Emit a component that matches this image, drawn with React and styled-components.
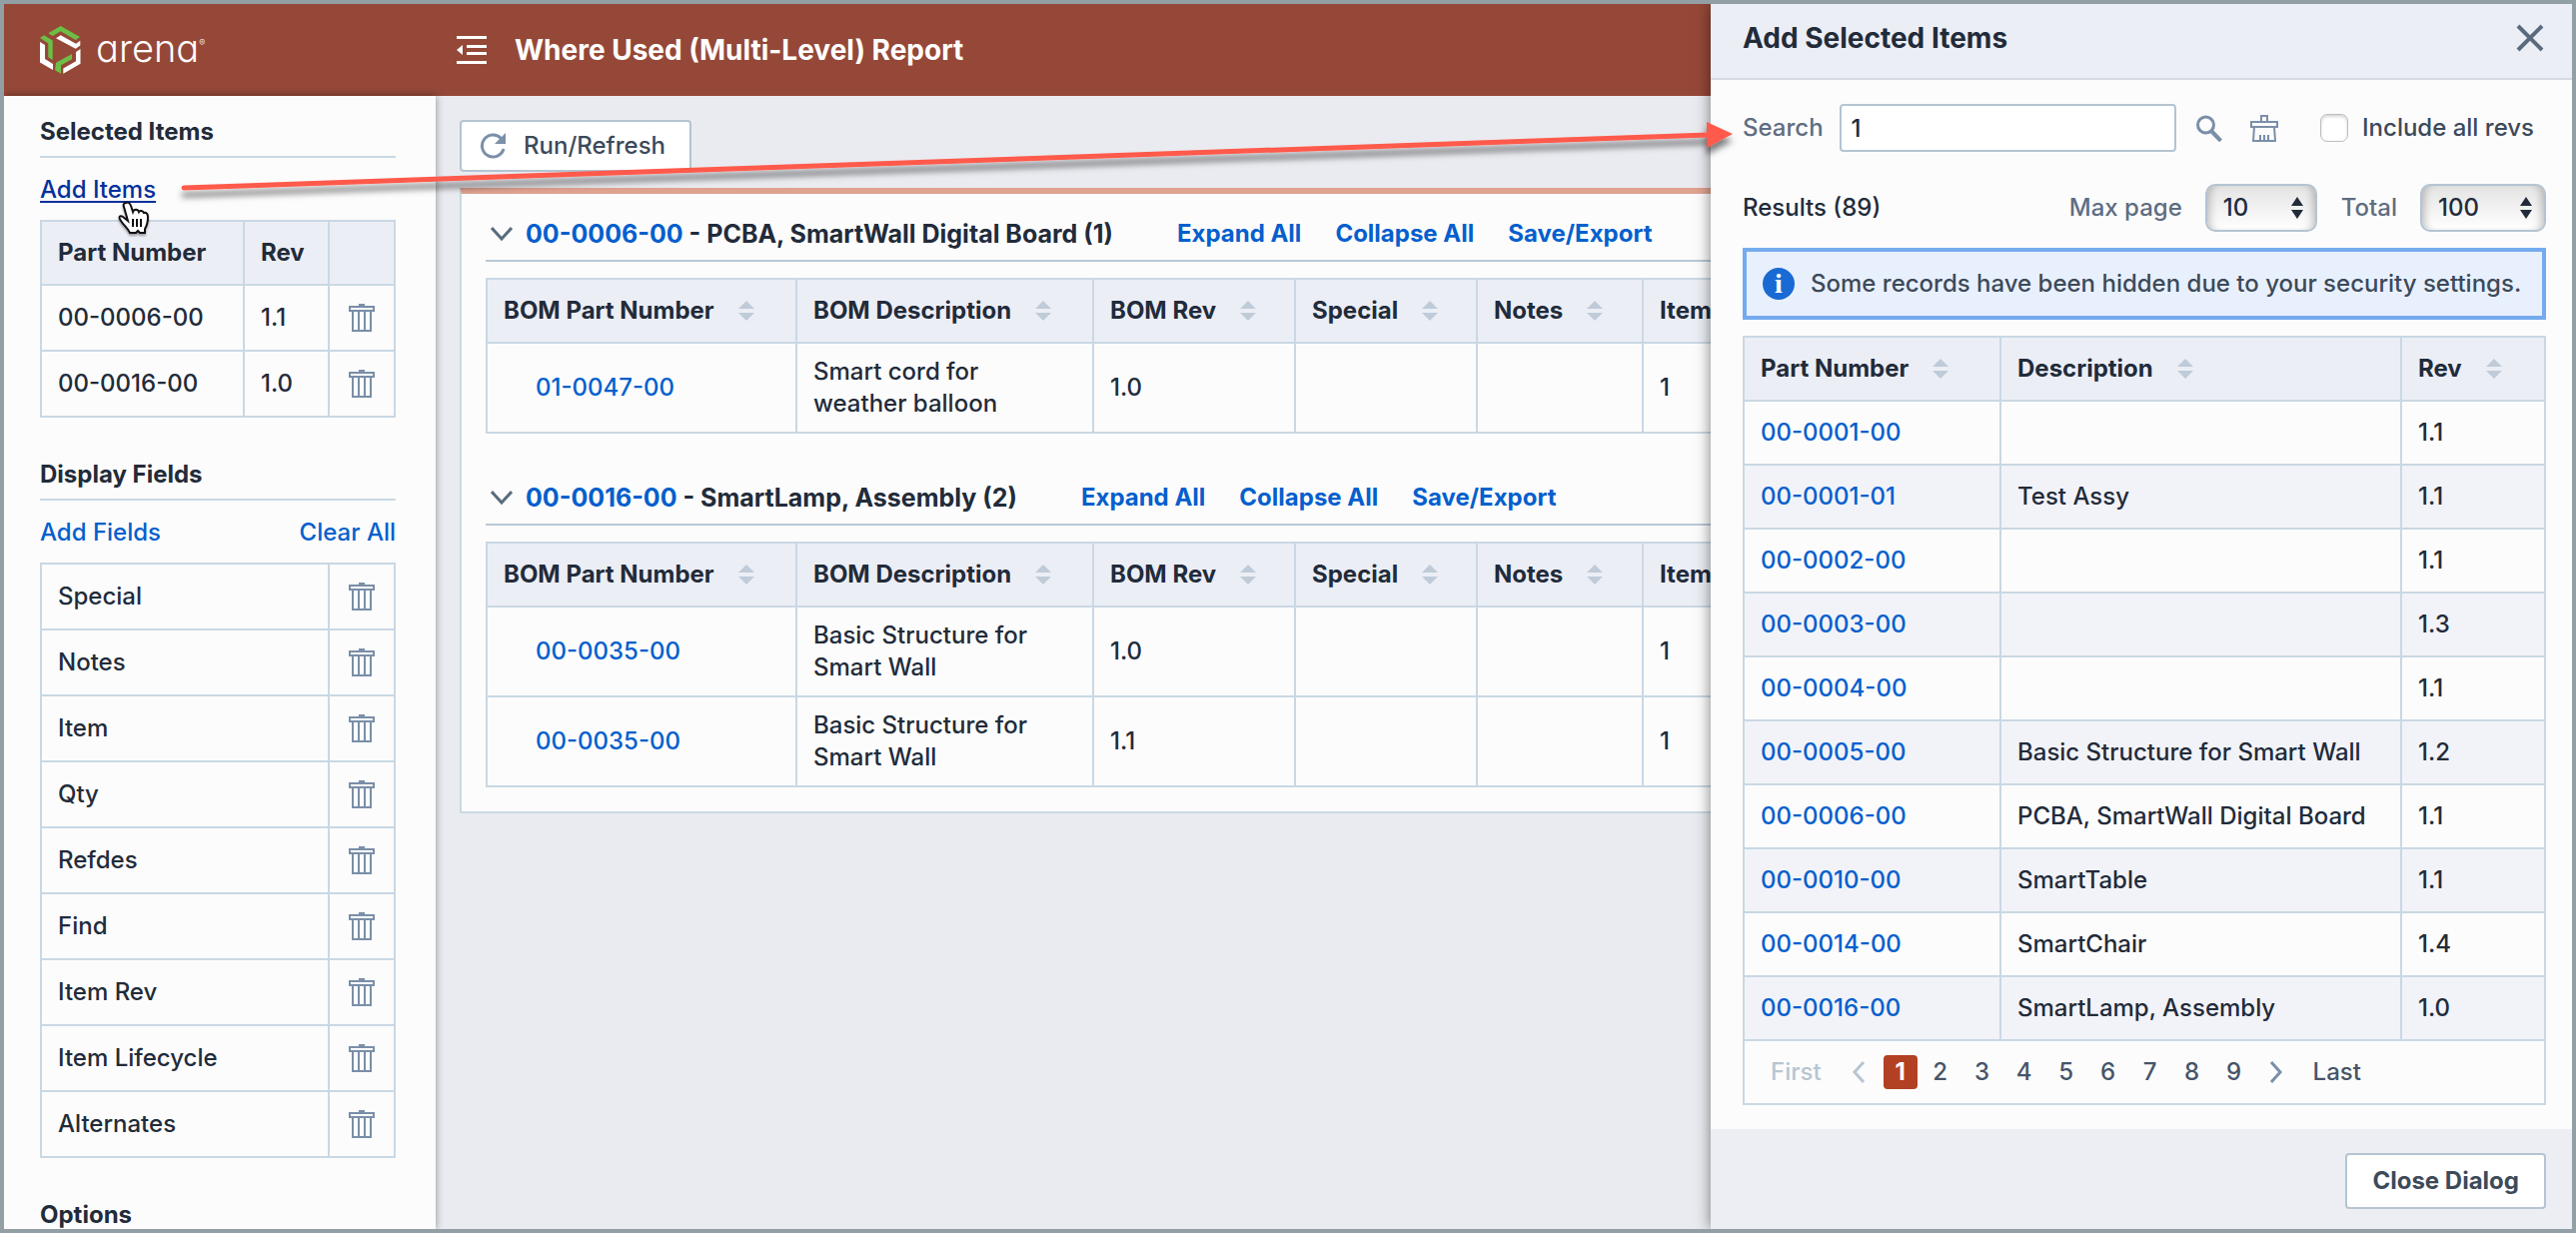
import React, { useState } from "react";
import styled, { createGlobalStyle } from "styled-components";

const GlobalStyle = createGlobalStyle`
  * {
    box-sizing: border-box;
  }

  body {
    margin: 0;
    font-family: Inter, "Liberation Sans", sans-serif;
    font-size: 24px;
    line-height: 32px;
    font-weight: 500;
    color: #222b3a;
    background: #929fa5;
  }

  button, input, select {
    font: inherit;
    color: inherit;
  }

  svg {
    display: block;
    flex: none;
  }
`;

const Page = styled.div`
  position: relative;
  height: 100vh;
  border: 4px solid #929fa5;
  background: #eaebf0;
  display: flex;
  flex-direction: column;
  overflow: hidden;
`;

const TopBar = styled.header`
  flex: none;
  height: 92px;
  padding-left: 36px;
  background: #954837;
  color: #ffffff;
  display: flex;
  align-items: center;
`;

const Brand = styled.a`
  width: 417px;
  display: flex;
  align-items: center;
  gap: 15px;
  color: #ffffff;
  text-decoration: none;
`;

const BrandName = styled.span`
  padding-bottom: 4px;
  font-size: 38px;
  line-height: 48px;
  font-weight: 300;
  font-feature-settings: "cv11";
`;

const BrandMark = styled.sup`
  font-size: 9px;
  line-height: 9px;
  vertical-align: 16px;
`;

const PageTitle = styled.h1`
  margin: 0 0 0 28px;
  font-size: 28px;
  line-height: 36px;
  font-weight: 700;
`;

const IconButton = styled.button`
  display: flex;
  align-items: center;
  justify-content: center;
  padding: 0;
  border: none;
  background: none;
  color: ${(props) => props.$color || "#7a8fa8"};
  cursor: pointer;
`;

const Columns = styled.div`
  flex: 1;
  min-height: 0;
  display: flex;
`;

const Sidebar = styled.aside`
  flex: none;
  width: 432px;
  padding: 20px 40px 0 36px;
  background: #fcfcfc;
  box-shadow: 0 0 8px rgba(0, 0, 0, 0.4);
  overflow: hidden;
  clip-path: inset(-8px -8px 0 0);
`;

const SidebarSection = styled.section`
  margin-bottom: 41px;
`;

const SidebarTitle = styled.h2`
  margin: 0;
  padding-bottom: 8px;
  border-bottom: 2px solid #c9d8e4;
  font-size: 24px;
  line-height: 32px;
  font-weight: 700;
`;

const SidebarLinks = styled.div`
  height: 62px;
  padding-top: 2px;
  display: flex;
  align-items: center;
  justify-content: space-between;
`;

const TextLink = styled.a`
  color: ${(props) => (props.$active ? "#06309a" : "#055fcd")};
  text-decoration: ${(props) => (props.$active ? "underline" : "none")};
  text-decoration-thickness: 2px;
  text-underline-offset: 3px;
  font-weight: ${(props) => (props.$bold ? 700 : 500)};
`;

const Table = styled.table`
  width: ${(props) => props.$width || "100%"};
  table-layout: fixed;
  border-collapse: collapse;
`;

const HeadCell = styled.th`
  height: 64px;
  padding: 0 16px;
  border: 2px solid #c9d8e4;
  background: #eceef6;
  text-align: left;
  font-weight: 700;
  white-space: nowrap;
`;

const Cell = styled.td`
  height: ${(props) => props.$height || 64}px;
  padding: 0 16px 0 ${(props) => (props.$indent ? 48 : 16)}px;
  border: 2px solid #c9d8e4;
  background: ${(props) => (props.$shaded ? "#f2f3f8" : "#fcfcfc")};
`;

const IconCell = styled(Cell)`
  padding: 0;

  & > button {
    margin: 0 auto;
  }
`;

const SortLabel = styled.span`
  display: flex;
  align-items: center;
  gap: 24px;
`;

const Main = styled.main`
  flex: 1;
  min-width: 0;
  padding: 24px 0 0 24px;
`;

const RunButton = styled.button`
  height: 52px;
  padding: 0 24px 0 18px;
  display: flex;
  align-items: center;
  gap: 18px;
  border: 2px solid #b4c4d2;
  border-radius: 4px;
  background: #ffffff;
  color: #3c4a5a;
`;

const ReportPanel = styled.section`
  margin-top: 16px;
  padding: 14px 0 24px 24px;
  border: 2px solid #c9d8e4;
  border-top: 6px solid #dfa290;
  background: #fcfcfc;
`;

const Group = styled.section`
  & + & {
    margin-top: 38px;
  }
`;

const GroupHeader = styled.div`
  height: 54px;
  padding-left: 5px;
  border-bottom: 2px solid #b9c8d5;
  display: flex;
  align-items: center;
`;

const GroupTitle = styled.h3`
  margin: 0 64px 0 13px;
  font-size: 25px;
  line-height: 32px;
  font-weight: 700;
`;

const GroupActions = styled.nav`
  display: flex;
  gap: 34px;
`;

const TableScroll = styled.div`
  margin-top: 16px;
  overflow: hidden;
`;

// Slides over the report from the right edge
const Drawer = styled.aside`
  position: absolute;
  top: 0;
  right: 0;
  bottom: 0;
  width: 862px;
  display: flex;
  flex-direction: column;
  background: #fcfcfc;
  box-shadow: 0 0 14px rgba(0, 0, 0, 0.5);
`;

const DrawerHeader = styled.div`
  height: 76px;
  padding: 0 28px 6px 32px;
  border-bottom: 2px solid #d5dae1;
  background: #eceef6;
  display: flex;
  align-items: center;
  justify-content: space-between;
`;

const DrawerTitle = styled.h2`
  margin: 0;
  font-size: 28px;
  line-height: 36px;
  font-weight: 700;
`;

const DrawerBody = styled.div`
  flex: 1;
  padding: 24px 26px 0 32px;
`;

const SearchRow = styled.div`
  display: flex;
  align-items: center;
`;

const FieldLabel = styled.label`
  color: #5e6d82;
`;

const SearchInput = styled.input`
  flex: 1;
  min-width: 0;
  height: 48px;
  margin: 0 20px 0 16px;
  padding: 0 10px;
  border: 2px solid #b4c4d2;
  border-radius: 4px;
  background: #ffffff;
`;

const ClearButton = styled(IconButton)`
  margin-left: 28px;
`;

const CheckLabel = styled.label`
  margin: 0 12px 0 42px;
  display: flex;
  align-items: center;
  gap: 14px;
  color: #3c4a5a;
`;

const CheckBox = styled.input`
  appearance: none;
  width: 28px;
  height: 28px;
  margin: 0;
  border: 1px solid #bdbdbf;
  border-radius: 7px;
  background: #ffffff;
  box-shadow: inset 0 2px 3px rgba(0, 0, 0, 0.16);
`;

const ResultsRow = styled.div`
  margin: 32px 0 16px;
  display: flex;
  align-items: center;
`;

const ResultsCount = styled.span`
  flex: 1;
`;

const SelectWrap = styled.span`
  position: relative;
  margin-left: 23px;
  color: #222b3a;

  & > svg {
    position: absolute;
    right: 14px;
    top: 13px;
    pointer-events: none;
  }

  & + label {
    margin-left: 24px;
  }
`;

const Select = styled.select`
  appearance: none;
  display: block;
  width: ${(props) => props.$width}px;
  height: 48px;
  padding: 0 16px;
  border: 2px solid #b4c4d2;
  border-radius: 10px;
  background: linear-gradient(#e4e4e4, #ffffff);
  box-shadow: inset 8px 0 8px -6px rgba(0, 0, 0, 0.25), inset -8px 0 8px -6px rgba(0, 0, 0, 0.25);
`;

const Notice = styled.div`
  height: 72px;
  margin-bottom: 16px;
  padding: 0 16px;
  border: 4px solid #75abee;
  background: #e9f0fd;
  color: #3c4a5a;
  display: flex;
  align-items: center;
  gap: 16px;
  white-space: nowrap;
`;

const InfoBadge = styled.span`
  flex: none;
  width: 32px;
  height: 32px;
  border-radius: 50%;
  background: #1a6ad4;
  color: #ffffff;
  font-family: "Liberation Serif", serif;
  font-size: 28px;
  line-height: 32px;
  font-weight: 700;
  text-align: center;
`;

const Pager = styled.nav`
  height: 64px;
  padding-left: 26px;
  border: 2px solid #c9d8e4;
  border-top: none;
  display: flex;
  align-items: center;
`;

const PagerText = styled.button`
  padding: 0;
  border: none;
  background: none;
  color: ${(props) => (props.disabled ? "#b8c5d2" : "#46556a")};
`;

const PagerArrow = styled(IconButton)`
  width: 14px;
  margin: 0 ${(props) => (props.$next ? 30 : 18)}px 0 ${(props) => (props.$next ? 10 : 30)}px;
`;

const PageNumber = styled.button`
  width: 34px;
  height: 34px;
  margin-right: ${(props) => (props.$current ? 6 : 8)}px;
  padding: 0;
  border: none;
  border-radius: 4px;
  background: ${(props) => (props.$current ? "#b24023" : "none")};
  color: ${(props) => (props.$current ? "#ffffff" : "#46556a")};
  font-weight: ${(props) => (props.$current ? 700 : 500)};
`;

const DrawerFooter = styled.div`
  height: 100px;
  padding: 4px 26px 0 32px;
  background: #edeef4;
  display: flex;
  align-items: center;
  justify-content: flex-end;
`;

const CloseButton = styled.button`
  height: 56px;
  padding: 0 25px;
  border: 2px solid #b4c4d2;
  border-radius: 4px;
  background: #ffffff;
  color: #3c4a5a;
  font-weight: 700;
`;

const Callout = styled.svg`
  position: absolute;
  left: 0;
  top: 0;
  pointer-events: none;
  overflow: visible;
`;

const LinkAnchor = styled.span`
  position: relative;
`;

const Pointer = styled.svg`
  position: absolute;
  left: 78px;
  top: 27px;
  filter: drop-shadow(0 2px 1px rgba(0, 0, 0, 0.35));
`;

const LogoIcon = () => (
  <svg width="41" height="48" viewBox="0 0 41 48">
    <g fill="#6cbf45">
      <path d="M8.300 7.300 L20.700 0 L40 11 L35.700 14 L20.700 5.300 L12.700 10 Z" />
      <path d="M0 12 L4 9.300 L12.700 14.500 V34 L8.300 31.300 V17.500 Z" />
      <path d="M16 36.700 L32 28 V33.300 L21 39.300 V47.700 L15 44.300 Z" />
    </g>
    <g fill="#ffffff">
      <path d="M16 12.300 L20.700 9.300 L36 17.700 L40.300 14.700 V19.500 L35.700 22.700 Z" />
      <path d="M0 16 L5 19 V33 L13 38 V44 L0 36.500 Z" />
      <path d="M36 26 L40.500 23 V37.700 L23.300 47.700 V42.500 L36 35.300 Z" />
    </g>
  </svg>
);

const MenuIcon = () => (
  <svg width="30" height="28" viewBox="0 0 30 28" fill="currentColor">
    <rect width="30" height="3" />
    <rect x="10" y="9" width="20" height="3" />
    <rect x="10" y="16" width="20" height="3" />
    <rect y="25" width="30" height="3" />
    <path d="M6 9 V19 L0 14 Z" />
  </svg>
);

const TrashIcon = () => (
  <svg width="26" height="28" viewBox="0 0 26 28" fill="none" stroke="currentColor">
    <rect x="10" y="0" width="6" height="3" fill="currentColor" stroke="none" />
    <rect x="1" y="3" width="24" height="4" strokeWidth="2" />
    <path d="M4 8 V27 H22 V8 M10 8 V27 M16 8 V27" strokeWidth="2" />
  </svg>
);

const RefreshIcon = () => (
  <svg width="26" height="26" viewBox="0 0 26 26">
    <path d="M21.500 5.500 A11 11 0 1 0 24 16" fill="none" stroke="#7a8fa8" strokeWidth="3" />
    <path d="M26 0 V11 H15 Z" fill="#7a8fa8" />
  </svg>
);

const ChevronIcon = () => (
  <svg width="22" height="14" viewBox="0 0 22 14" fill="none" stroke="#5b6b7e" strokeWidth="3">
    <path d="M1 1 L11 12 L21 1" />
  </svg>
);

const SortIcon = () => (
  <svg width="16" height="20" viewBox="0 0 16 20" fill="#bfcbd8">
    <path d="M8 0 L16 8 H0 Z M0 12 H16 L8 20 Z" />
  </svg>
);

const SearchIcon = () => (
  <svg width="26" height="27" viewBox="0 0 26 27" fill="none" stroke="currentColor">
    <circle cx="9.500" cy="10" r="8" strokeWidth="3" />
    <path d="M15 16 L24.500 26" strokeWidth="4" />
  </svg>
);

const BrushIcon = () => (
  <svg width="28" height="29" viewBox="0 0 28 29" fill="none" stroke="currentColor" strokeWidth="2">
    <path d="M11 8 V2 H17 V8 M1 8 H27 V13 H1 Z M4 13 L3 27 H25 L24 13 M10 27 V21 M14 27 V21 M18 27 V21" />
  </svg>
);

const CloseIcon = () => (
  <svg width="28" height="28" viewBox="0 0 28 28" fill="none" stroke="currentColor" strokeWidth="4">
    <path d="M2 2 L26 26 M26 2 L2 26" />
  </svg>
);

const SelectArrows = () => (
  <svg width="12" height="22" viewBox="0 0 12 22" fill="#222b3a">
    <path d="M6 0 L12 9 H0 Z M0 13 H12 L6 22 Z" />
  </svg>
);

const PageArrow = ({ back }) => (
  <svg width="14" height="22" viewBox="0 0 14 22" fill="none" stroke="currentColor" strokeWidth="3">
    <path d={back ? "M12 1 L3 11 L12 21" : "M2 1 L11 11 L2 21"} />
  </svg>
);

const selectedItems = [
  { number: "00-0006-00", rev: "1.1" },
  { number: "00-0016-00", rev: "1.0" },
];

const displayFields = [
  "Special",
  "Notes",
  "Item",
  "Qty",
  "Refdes",
  "Find",
  "Item Rev",
  "Item Lifecycle",
  "Alternates",
];

const reportColumns = [
  { name: "BOM Part Number", width: 310 },
  { name: "BOM Description", width: 297 },
  { name: "BOM Rev", width: 202 },
  { name: "Special", width: 182 },
  { name: "Notes", width: 166 },
  { name: "Item", width: 166 },
];

const reportGroups = [
  {
    number: "00-0006-00",
    title: "PCBA, SmartWall Digital Board (1)",
    rows: [["01-0047-00", "Smart cord for weather balloon", "1.0", "", "", "1"]],
  },
  {
    number: "00-0016-00",
    title: "SmartLamp, Assembly (2)",
    rows: [
      ["00-0035-00", "Basic Structure for Smart Wall", "1.0", "", "", "1"],
      ["00-0035-00", "Basic Structure for Smart Wall", "1.1", "", "", "1"],
    ],
  },
];

const results = [
  ["00-0001-00", "", "1.1"],
  ["00-0001-01", "Test Assy", "1.1"],
  ["00-0002-00", "", "1.1"],
  ["00-0003-00", "", "1.3"],
  ["00-0004-00", "", "1.1"],
  ["00-0005-00", "Basic Structure for Smart Wall", "1.2"],
  ["00-0006-00", "PCBA, SmartWall Digital Board", "1.1"],
  ["00-0010-00", "SmartTable", "1.1"],
  ["00-0014-00", "SmartChair", "1.4"],
  ["00-0016-00", "SmartLamp, Assembly", "1.0"],
];

const SortHead = ({ children }) => (
  <HeadCell>
    <SortLabel>
      {children}
      <SortIcon />
    </SortLabel>
  </HeadCell>
);

const DeleteCell = ({ name }) => (
  <IconCell>
    <IconButton aria-label={`Remove ${name}`}>
      <TrashIcon />
    </IconButton>
  </IconCell>
);

const ReportGroup = ({ group }) => (
  <Group>
    <GroupHeader>
      <IconButton aria-label="Toggle group">
        <ChevronIcon />
      </IconButton>
      <GroupTitle>
        <TextLink href="#item" $bold>
          {group.number}
        </TextLink>{" "}
        - {group.title}
      </GroupTitle>
      <GroupActions>
        <TextLink href="#expand" $bold>Expand All</TextLink>
        <TextLink href="#collapse" $bold>Collapse All</TextLink>
        <TextLink href="#export" $bold>Save/Export</TextLink>
      </GroupActions>
    </GroupHeader>
    <TableScroll>
      <Table $width="1323px">
        <colgroup>
          {reportColumns.map((col) => (
            <col key={col.name} width={col.width} />
          ))}
        </colgroup>
        <thead>
          <tr>
            {reportColumns.map((col) => (
              <SortHead key={col.name}>{col.name}</SortHead>
            ))}
          </tr>
        </thead>
        <tbody>
          {group.rows.map((row, i) => (
            <tr key={i}>
              {row.map((value, j) => (
                <Cell key={j} $height={90} $indent={j === 0}>
                  {j === 0 ? <TextLink href="#item">{value}</TextLink> : value}
                </Cell>
              ))}
            </tr>
          ))}
        </tbody>
      </Table>
    </TableScroll>
  </Group>
);

const AddItemsDrawer = () => {
  const [search, setSearch] = useState("1");
  const [allRevs, setAllRevs] = useState(false);
  const [page, setPage] = useState(1);

  return (
    <Drawer>
      <DrawerHeader>
        <DrawerTitle>Add Selected Items</DrawerTitle>
        <IconButton $color="#5b6b7e" aria-label="Close">
          <CloseIcon />
        </IconButton>
      </DrawerHeader>
      <DrawerBody>
        <SearchRow>
          <FieldLabel htmlFor="search">Search</FieldLabel>
          <SearchInput
            id="search"
            value={search}
            onChange={(e) => setSearch(e.target.value)}
          />
          <IconButton aria-label="Search">
            <SearchIcon />
          </IconButton>
          <ClearButton aria-label="Clear" onClick={() => setSearch("")}>
            <BrushIcon />
          </ClearButton>
          <CheckLabel>
            <CheckBox
              type="checkbox"
              checked={allRevs}
              onChange={() => setAllRevs(!allRevs)}
            />
            Include all revs
          </CheckLabel>
        </SearchRow>
        <ResultsRow>
          <ResultsCount>Results (89)</ResultsCount>
          <FieldLabel htmlFor="max-page">Max page</FieldLabel>
          <SelectWrap>
            <Select id="max-page" $width={112} defaultValue="10">
              <option>10</option>
              <option>20</option>
            </Select>
            <SelectArrows />
          </SelectWrap>
          <FieldLabel htmlFor="total">Total</FieldLabel>
          <SelectWrap>
            <Select id="total" $width={126} defaultValue="100">
              <option>100</option>
              <option>200</option>
            </Select>
            <SelectArrows />
          </SelectWrap>
        </ResultsRow>
        <Notice>
          <InfoBadge>i</InfoBadge>
          Some records have been hidden due to your security settings.
        </Notice>
        <Table>
          <colgroup>
            <col width="257" />
            <col />
            <col width="144" />
          </colgroup>
          <thead>
            <tr>
              <SortHead>Part Number</SortHead>
              <SortHead>Description</SortHead>
              <SortHead>Rev</SortHead>
            </tr>
          </thead>
          <tbody>
            {results.map(([number, description, rev], i) => (
              <tr key={number}>
                <Cell $shaded={i % 2 === 1}>
                  <TextLink href="#item">{number}</TextLink>
                </Cell>
                <Cell $shaded={i % 2 === 1}>{description}</Cell>
                <Cell $shaded={i % 2 === 1}>{rev}</Cell>
              </tr>
            ))}
          </tbody>
        </Table>
        <Pager>
          <PagerText disabled={page === 1}>First</PagerText>
          <PagerArrow $color="#b8c5d2" aria-label="Previous page">
            <PageArrow back />
          </PagerArrow>
          {[1, 2, 3, 4, 5, 6, 7, 8, 9].map((n) => (
            <PageNumber key={n} $current={n === page} onClick={() => setPage(n)}>
              {n}
            </PageNumber>
          ))}
          <PagerArrow $next aria-label="Next page">
            <PageArrow />
          </PagerArrow>
          <PagerText>Last</PagerText>
        </Pager>
      </DrawerBody>
      <DrawerFooter>
        <CloseButton>Close Dialog</CloseButton>
      </DrawerFooter>
    </Drawer>
  );
};

const App = () => (
  <>
    <GlobalStyle />
    <Page>
      <TopBar>
        <Brand href="#home">
          <LogoIcon />
          <BrandName>
            arena<BrandMark>®</BrandMark>
          </BrandName>
        </Brand>
        <IconButton $color="#ffffff" aria-label="Collapse menu">
          <MenuIcon />
        </IconButton>
        <PageTitle>Where Used (Multi-Level) Report</PageTitle>
      </TopBar>
      <Columns>
        <Sidebar>
          <SidebarSection>
            <SidebarTitle>Selected Items</SidebarTitle>
            <SidebarLinks>
              <LinkAnchor>
                <TextLink href="#add-items" $active>Add Items</TextLink>
                <Pointer width="32" height="36" viewBox="0 0 32 36">
                  <path
                    d="M8 2 C10 1 12 2 13 5 L15 11 C16 8 20 8 21 11 C22 9 25 10 26 12 C28 11 30 13 30 16 C30 22 29 25 27 28 V32 H22 L20 30 L18 32 H12 C10 27 6 25 3 20 C0 16 2 14 5 16 L10 20 L6 6 C5 4 6 2 8 2 Z"
                    fill="#ffffff"
                    stroke="#111111"
                    strokeWidth="2"
                  />
                  <path d="M15 18 V26 M19 18 V26 M23 18 V26" stroke="#111111" strokeWidth="2" />
                </Pointer>
              </LinkAnchor>
            </SidebarLinks>
            <Table>
              <colgroup>
                <col />
                <col width="85" />
                <col width="66" />
              </colgroup>
              <thead>
                <tr>
                  <HeadCell>Part Number</HeadCell>
                  <HeadCell>Rev</HeadCell>
                  <HeadCell />
                </tr>
              </thead>
              <tbody>
                {selectedItems.map((item) => (
                  <tr key={item.number}>
                    <Cell $height={66}>{item.number}</Cell>
                    <Cell $height={66}>{item.rev}</Cell>
                    <DeleteCell name={item.number} />
                  </tr>
                ))}
              </tbody>
            </Table>
          </SidebarSection>
          <SidebarSection>
            <SidebarTitle>Display Fields</SidebarTitle>
            <SidebarLinks>
              <TextLink href="#add-fields">Add Fields</TextLink>
              <TextLink href="#clear">Clear All</TextLink>
            </SidebarLinks>
            <Table>
              <colgroup>
                <col />
                <col width="66" />
              </colgroup>
              <tbody>
                {displayFields.map((field) => (
                  <tr key={field}>
                    <Cell $height={66}>{field}</Cell>
                    <DeleteCell name={field} />
                  </tr>
                ))}
              </tbody>
            </Table>
          </SidebarSection>
          <SidebarSection>
            <SidebarTitle>Options</SidebarTitle>
          </SidebarSection>
        </Sidebar>
        <Main>
          <RunButton>
            <RefreshIcon />
            Run/Refresh
          </RunButton>
          <ReportPanel>
            {reportGroups.map((group) => (
              <ReportGroup key={group.number} group={group} />
            ))}
          </ReportPanel>
        </Main>
      </Columns>
      <AddItemsDrawer />
      <Callout width="1740" height="200" viewBox="4 4 1740 200">
        <defs>
          <filter id="callout-shadow" x="-5%" y="-50%" width="110%" height="250%">
            <feDropShadow dx="0" dy="7" stdDeviation="3" floodColor="#000000" floodOpacity="0.5" />
          </filter>
        </defs>
        <g filter="url(#callout-shadow)">
          <path d="M184 188 L1710 135" stroke="#ff5a4b" strokeWidth="5" strokeLinecap="round" />
          <path d="M1708 122 L1734 134 L1708 148 Z" fill="#ff5a4b" />
        </g>
      </Callout>
    </Page>
  </>
);

export default App;
